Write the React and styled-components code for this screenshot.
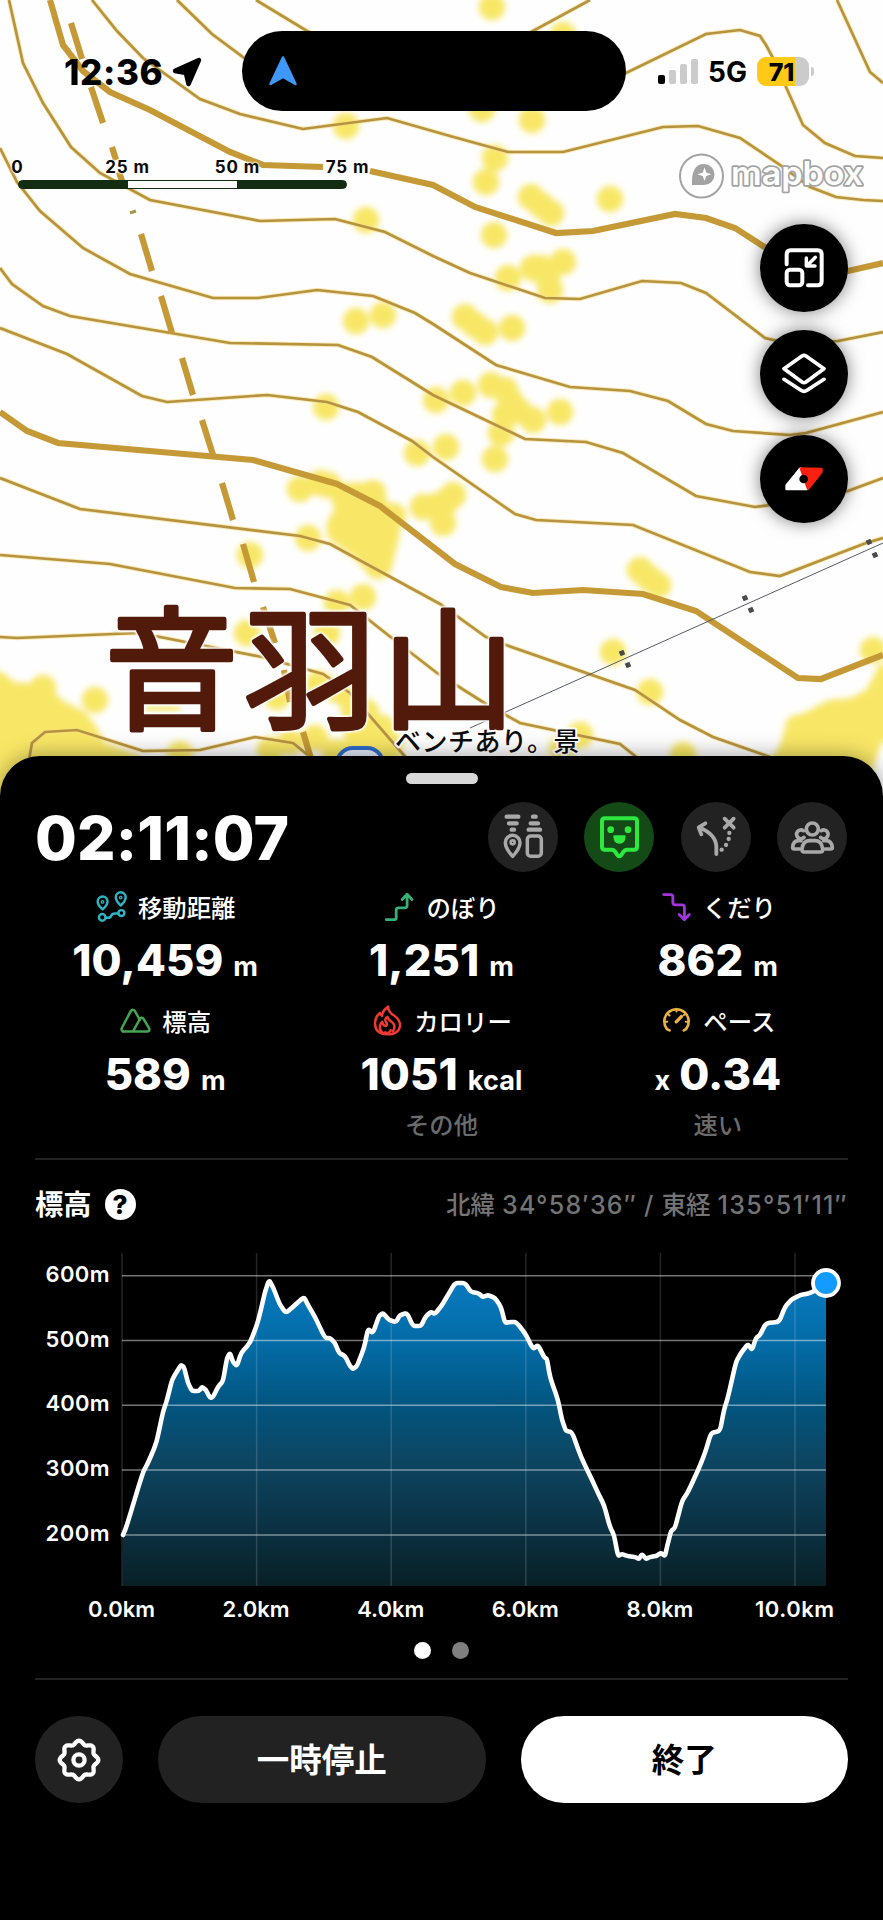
import React from 'react';
import styled, { createGlobalStyle } from 'styled-components';

const GlobalStyle = createGlobalStyle`
  body {
    margin: 0;
    background: #000;
  }
  * {
    box-sizing: border-box;
  }
`;

const FONT = "Inter, 'Noto Sans CJK JP', sans-serif";

/* ---------- layout ---------- */

const Screen = styled.div`
  display: flex;
  flex-direction: column;
  width: 883px;
  height: 1920px;
  overflow: hidden;
  background: #000;
  font-family: ${FONT};
  color: #fff;
`;

const MapArea = styled.div`
  position: relative;
  flex: none;
  height: 756px;
`;

const MapCanvas = styled.svg`
  position: absolute;
  top: 0;
  left: 0;
  background: #fefefe;
`;

const PlaceName = styled.text`
  fill: #521a0b;
  stroke: #521a0b;
  stroke-width: 4.4px;
  stroke-linejoin: round;
  filter: drop-shadow(0 0 1px #fff) drop-shadow(0 0 1px #fff) drop-shadow(0 0 1px #fff);
`;

const StatusBar = styled.div`
  position: relative;
  display: grid;
  grid-template-columns: 242px 384px 1fr;
  align-items: center;
  height: 142px;
  color: #000;
`;

const Clock = styled.div`
  display: flex;
  align-items: center;
  gap: 9px;
  padding: 2px 0 0 64px;
  font-size: 35px;
  font-weight: 800;
  line-height: 40px;
  letter-spacing: 0.6px;
`;

const Island = styled.div`
  display: flex;
  align-items: center;
  height: 80px;
  padding-left: 26px;
  border-radius: 40px;
  background: #000;
`;

const Signals = styled.div`
  display: flex;
  align-items: center;
  padding: 1px 0 0 32px;
  font-size: 28px;
  font-weight: 650;
`;

const SignalBars = styled.div`
  display: flex;
  align-items: flex-end;
  gap: 4px;
  height: 25px;
  margin-right: 10px;
`;

const Bar = styled.span`
  width: 7px;
  height: ${props => props.$h}px;
  border-radius: 2px;
  background: ${props => (props.$on ? '#000' : '#cbcbcb')};
`;

const Battery = styled.div`
  display: flex;
  align-items: center;
  justify-content: center;
  width: 52px;
  height: 29px;
  margin-left: 10px;
  padding-right: 3px;
  border-radius: 9px;
  background: linear-gradient(90deg, #fec917 38px, #cbcbcb 38px);
  font-size: 25px;
  font-weight: 800;
  letter-spacing: -0.3px;
`;

const BatteryTip = styled.span`
  width: 3px;
  height: 9px;
  margin-left: 2px;
  border-radius: 0 4px 4px 0;
  background: #cbcbcb;
`;

const MapTop = styled.div`
  position: relative;
  display: flex;
  justify-content: space-between;
  height: 61px;
  padding: 11px 19px 0 18px;
`;

const Scale = styled.div`
  width: 329px;
`;

const ScaleLabels = styled.div`
  display: flex;
  justify-content: space-between;
  margin: 0 -31px;
  color: #0a0a0a;
  font-size: 17px;
  font-weight: 650;
  line-height: 27px;
  letter-spacing: 0.9px;
  text-shadow: 0 0 2px #fff, 0 0 2px #fff, 0 0 3px #fff;

  span {
    width: 61px;
    padding-top: 1px;
    text-align: center;
    white-space: nowrap;
  }
`;

const ScaleBar = styled.div`
  display: grid;
  grid-template-columns: repeat(3, 1fr);
  height: 9px;
  margin-top: -1px;
  border: 1px solid #132d12;
  border-radius: 5px;
  overflow: hidden;
  background: #132d12;

  i:nth-child(2) {
    background: #fafafa;
  }
`;

const LogoBox = styled.div`
  margin-top: -2px;
`;

const MapButtons = styled.div`
  position: relative;
  display: flex;
  flex-direction: column;
  align-items: flex-end;
  gap: 17.500px;
  padding: 21px 35px 0 0;
`;

const RoundButton = styled.button`
  display: flex;
  align-items: center;
  justify-content: center;
  width: 88px;
  height: 88px;
  padding: 0;
  border: 0;
  border-radius: 50%;
  background: #000;
  box-shadow: 0 0 17px rgba(0, 0, 0, 0.5);
`;

const Sheet = styled.div`
  position: relative;
  display: flex;
  flex-direction: column;
  flex: 1;
  padding-top: 17px;
  border-radius: 40px 40px 0 0;
  background: #000;
  box-shadow: 0 0 22px rgba(0, 0, 0, 0.38);
`;

const Handle = styled.div`
  align-self: center;
  width: 72px;
  height: 11px;
  border-radius: 6px;
  background: #d8d8d8;
`;

const SheetHeader = styled.div`
  display: flex;
  align-items: center;
  justify-content: space-between;
  height: 70px;
  margin: 18px 36px 18px 35px;
`;

const Timer = styled.div`
  padding-top: 1px;
  font-size: 60.5px;
  font-weight: 800;
  line-height: 70px;
  letter-spacing: 0.2px;
`;

const Actions = styled.div`
  display: flex;
  gap: 26.5px;
`;

const Action = styled.button`
  width: 70px;
  height: 70px;
  padding: 0;
  border: 0;
  border-radius: 50%;
  background: ${props => (props.$active ? '#134a16' : '#222')};
  color: ${props => (props.$active ? '#2fe83f' : '#a9a9a9')};

  svg {
    display: block;
  }
`;

const Stats = styled.div`
  display: grid;
  grid-template-columns: repeat(3, 1fr);
  row-gap: 14px;
  height: 268px;
  margin: 0 27px;
  align-content: start;
`;

const StatBox = styled.div`
  display: flex;
  flex-direction: column;
  align-items: center;
`;

const StatLabel = styled.div`
  display: flex;
  align-items: center;
  gap: 10px;
  height: 36px;
  padding-bottom: 4px;
  font-size: 24.4px;
  font-weight: 500;
`;

const StatValue = styled.div`
  height: 60px;
  margin-top: 4px;
  font-size: 43.5px;
  font-weight: 800;
  line-height: 60px;
  letter-spacing: 0.1px;

  small {
    font-size: 27px;
    font-weight: 750;
  }
  small:first-child {
    margin-right: 9px;
  }
  small:last-child {
    margin-left: 10px;
  }
`;

const StatNote = styled.div`
  height: 36px;
  margin-top: 3px;
  color: #6b6b6b;
  font-size: 24.3px;
  font-weight: 500;
  line-height: 36px;
`;

const Divider = styled.div`
  flex: none;
  height: 2px;
  margin: 0 35px;
  background: #222;
`;

const ChartHeader = styled.div`
  display: flex;
  align-items: center;
  height: 40px;
  margin: 24px 35px 16px 35px;
`;

const ChartTitle = styled.div`
  padding-bottom: 3px;
  font-size: 28.3px;
  font-weight: 700;
`;

const Help = styled.span`
  display: flex;
  align-items: center;
  justify-content: center;
  width: 31px;
  height: 31px;
  margin-left: 13px;
  border-radius: 50%;
  background: #fff;
  color: #000;
  font-size: 26px;
  font-weight: 800;
`;

const Coords = styled.div`
  margin-left: auto;
  padding-bottom: 2px;
  color: #747474;
  font-size: 25px;
  font-weight: 500;
  letter-spacing: 1.3px;
  word-spacing: -1px;
  white-space: nowrap;

  span {
    font-size: 24.5px;
    letter-spacing: 0;
  }
`;

const ChartSvg = styled.svg`
  display: block;
  flex: none;
  font-family: ${FONT};
`;

const Pager = styled.div`
  display: flex;
  justify-content: center;
  gap: 21px;
  margin: 17px 0 19px;
`;

const Dot = styled.span`
  width: 17px;
  height: 17px;
  border-radius: 50%;
  background: ${props => (props.$on ? '#fff' : '#808080')};
`;

const Footer = styled.div`
  display: grid;
  grid-template-columns: 88px 1fr 1fr;
  gap: 35px;
  height: 87px;
  margin: 36px 35px 0;
`;

const FooterButton = styled.button`
  display: flex;
  align-items: center;
  justify-content: center;
  padding: 0;
  border: 0;
  border-radius: 44px;
  background: ${props => (props.$light ? '#fff' : '#222')};
  color: ${props => (props.$light ? '#000' : '#fff')};
  font-family: ${FONT};
  font-size: 32.5px;
  font-weight: 700;

  span {
    padding-bottom: 5px;
  }
`;

/* ---------- map data ---------- */

const CONTOURS = [
  '9,0 23,63 43,103 71,147 100,173 150,200 260,221 335,219 385,232 433,256 470,273 545,298 580,299 642,281 681,283 706,293 765,338 790,344 838,341 883,332',
  '92,0 117,31 143,58 200,99 240,114 303,129 387,118 450,136 508,152 563,152 663,127 698,126 740,138 783,167 810,187 836,197 863,200 883,201',
  '177,0 212,34 247,60 300,90',
  '600,85 626,73 706,34 740,30 760,36 766,45 773,58 786,87 803,125 825,143 855,156 883,158',
  '256,0 307,31 340,45',
  '520,38 533,31 590,0',
  '837,0 870,72 883,83',
  '0,148 17,182 40,211 83,248 130,274 213,298 258,298 317,290 373,296 415,313 433,324 496,365 570,387 630,391 668,401 706,424 733,431 790,435 806,433 883,412',
  '0,268 12,284 43,306 70,316 230,343 338,345 372,357 433,395 525,439 586,442 623,453 696,496 755,507 770,505 848,491 883,478',
  '0,328 67,354 142,396 167,402 267,395 327,402 358,412 412,441 433,457 515,514 536,520 633,525 750,572 780,576 866,543 883,538',
  '0,478 80,509 300,536 330,544 440,604 486,637 506,645 635,690 680,720 713,737 770,757',
  '0,555 110,564 235,588 290,589 350,605 388,635 437,673 486,704 520,723 620,744 640,760',
  '0,637 17,638 137,633 155,636 262,657 323,674 350,693 408,760',
  '29,760 32,743 45,732 77,730 143,751 200,750 255,737 293,743 309,756',
];

const BOLD_CONTOURS = [
  '50,0 63,45 83,71 110,92 150,110 230,152 263,165 323,167',
  '370,171 433,185 475,207 556,233 593,231 675,214 706,218 735,228 763,246 790,262 820,274 848,271 883,263',
  '0,412 27,431 58,443 253,460 337,484 380,506 433,547 455,564 501,587 533,593 583,590 643,594 696,611 798,678 821,679 883,655',
];

const DASHES =
  'M71 23L82 59M91 87L103 123M112 147L116 160M119 172L122 181M141 234L152 271M161 296L172 333M182 358L193 395M202 420L213 455M222 483L233 520M243 544L254 582M263 607L275 643M284 670L290 702M303 732L312 762';

const BLOBS = [
  [346, 126], [366, 220], [356, 321], [383, 315], [492, 7], [563, 35], [482, 109], [532, 120],
  [495, 158], [486, 182], [531, 197], [541, 205], [551, 213], [610, 199], [494, 235], [533, 268],
  [563, 262], [508, 278], [550, 290], [547, 276], [465, 317], [475, 325], [485, 332], [512, 328],
  [491, 385], [463, 393], [436, 400], [511, 402], [505, 415], [533, 420], [560, 412], [501, 433],
  [495, 459], [446, 447], [417, 453], [453, 495], [446, 502], [423, 507], [443, 523], [326, 407],
  [300, 489], [328, 485], [373, 493], [345, 500], [377, 510], [393, 516], [347, 515], [362, 523],
  [340, 531], [308, 538], [360, 540], [385, 535], [372, 552], [378, 566], [363, 597], [337, 603],
  [250, 555], [247, 633], [327, 633], [277, 697], [318, 684], [350, 697], [366, 712], [382, 728],
  [390, 745], [640, 570], [649, 578], [658, 585], [613, 652], [650, 692], [580, 735], [562, 748],
  [683, 755], [873, 650], [43, 688], [95, 700], [180, 754], [270, 750], [290, 742], [315, 738],
  [335, 752], [320, 483], [435, 506], [505, 390], [519, 411], [541, 268], [798, 728], [355, 725],
];

const TOWERS = [[622, 653], [628, 665], [745, 598], [751, 610], [869, 542], [875, 555]];

function MapBackground() {
  return (
    <MapCanvas width="883" height="820" viewBox="0 0 883 820">
      <defs>
        <filter id="soft" x="-10%" y="-10%" width="120%" height="120%">
          <feGaussianBlur stdDeviation="3.4" />
        </filter>
      </defs>
      <g fill="#f8e766" filter="url(#soft)">
        {BLOBS.map(([x, y], i) => (
          <circle key={i} cx={x} cy={y} r="13.2" />
        ))}
        <path d="M318 476L345 483L373 482L386 500L402 512L399 538L390 574L372 578L352 556L330 540L326 524L336 506Z" />
        <path d="M318 672L348 684L372 706L396 740L402 770H330L345 735L340 705L314 694Z" />
        <path d="M-10 668Q5 672 14 682L45 684L62 700L85 712L96 726L104 742L140 756V830H-10Z" />
        <path d="M768 765L780 745L788 718L806 712L828 700L850 698L866 690L880 664H900V740L882 742L872 770V830H760Z" />
        <rect x="144" y="705" width="36" height="6" />
      </g>
      <g fill="none" stroke="#f7dc8a" strokeWidth="4.6" opacity="0.6">
        {CONTOURS.map(points => (
          <polyline key={points} points={points} />
        ))}
      </g>
      <g fill="none" stroke="#b6933f" strokeWidth="2.7">
        {CONTOURS.map(points => (
          <polyline key={points} points={points} />
        ))}
      </g>
      <g fill="none" stroke="#c59a36" strokeWidth="6.200">
        {BOLD_CONTOURS.map(points => (
          <polyline key={points} points={points} />
        ))}
        <path d={DASHES} />
      </g>
      <path d="M130 213L136 211" stroke="#a9944e" strokeWidth="3" />
      <path d="M470 728L883 543" stroke="#565a62" strokeWidth="1" />
      {TOWERS.map(([x, y]) => (
        <rect
          key={x}
          x={x - 2.5}
          y={y - 2.5}
          width="5"
          height="5"
          fill="#4a4a4a"
          transform={`rotate(-24 ${x} ${y})`}
        />
      ))}
      <rect x="337" y="748" width="46" height="40" rx="16" fill="#e4ecf8" stroke="#2e6bc8" strokeWidth="4" />
      <g fontFamily="'Noto Sans CJK JP', sans-serif">
        <PlaceName x="105" y="719" fontSize="133" fontWeight="400" letterSpacing="5.500">
          音羽山
        </PlaceName>
        <text x="395" y="751" fontSize="26" fontWeight="500" letterSpacing="0.500" fill="#0c0c0c" stroke="#fff" strokeWidth="4" paintOrder="stroke" strokeLinejoin="round">
          ベンチあり。景
        </text>
      </g>
    </MapCanvas>
  );
}

function MapboxLogo() {
  return (
    <svg width="186" height="50" viewBox="678 152 186 50">
      <circle cx="701.500" cy="177" r="21.500" fill="#fff" fillOpacity="0.7" stroke="#a3a3a3" strokeWidth="2" />
      <path d="M692 186Q691 165 704 165A10.5 10.5 0 0 1 704 186Z" fill="#a3a3a3" />
      <path d="M704.500 168.500L706.300 173.500L711.500 175.200L706.300 177L704.500 182L702.700 177L697.500 175.200L702.700 173.500Z" fill="#fff" />
      <text
        x="731"
        y="186"
        fontFamily="Inter, sans-serif"
        fontSize="33"
        fontWeight="600"
        textLength="132"
        lengthAdjust="spacingAndGlyphs"
        fill="#fff"
        stroke="#a3a3a3"
        strokeWidth="3.500"
        strokeLinejoin="round"
        paintOrder="stroke">
        mapbox
      </text>
    </svg>
  );
}

/* ---------- icons ---------- */

const CollapseIcon = () => (
  <svg width="44" height="44" viewBox="1047 737 132 132" fill="none" stroke="#fff" strokeWidth="12" strokeLinecap="round" strokeLinejoin="round">
    <path d="M1061 792V762Q1061 750 1073 750H1154Q1166 750 1166 762V843Q1166 855 1154 855H1125" />
    <rect x="1061" y="808" width="47" height="47" rx="10" />
    <path d="M1147 771L1122 796M1120 773V797H1146" strokeWidth="10.500" />
  </svg>
);

const LayersIcon = () => (
  <svg width="44" height="44" viewBox="1047 1056 132 132" fill="none" stroke="#fff" strokeWidth="11" strokeLinecap="round" strokeLinejoin="round">
    <path d="M1107 1068Q1113 1064 1119 1068L1173 1106L1119 1146Q1113 1150 1107 1146L1053 1106Z" />
    <path d="M1053 1138L1104 1171Q1113 1177 1122 1171L1173 1138" />
  </svg>
);

const CompassIcon = () => (
  <svg width="44" height="44" viewBox="1047 261 132 132" strokeWidth="8" strokeLinejoin="round">
    <path d="M1102 296L1061 346V357H1122Z" fill="#fff" stroke="#fff" />
    <path d="M1104 296L1165 297V306L1125 356Z" fill="#fb200f" stroke="#fb200f" />
    <circle cx="1112" cy="327" r="13" fill="#000" />
  </svg>
);

const LocationArrow = () => (
  <svg width="30" height="30" viewBox="0 0 29 29">
    <path d="M26 3L16 26L13.500 15.500L3 13.500Z" fill="#000" stroke="#000" strokeWidth="4.500" strokeLinejoin="round" />
  </svg>
);

const IslandArrow = () => (
  <svg width="30" height="32" viewBox="0 0 30 32">
    <path d="M15 2.500L27.500 29L15 22L2.500 29Z" fill="#3f98f7" stroke="#3f98f7" strokeWidth="2.500" strokeLinejoin="round" />
  </svg>
);

const strokeProps = {
  width: 70,
  height: 70,
  fill: 'none',
  stroke: 'currentColor',
  strokeLinecap: 'round',
  strokeLinejoin: 'round',
};

const SwitchIcon = () => (
  <svg {...strokeProps} viewBox="53 37 210 210" strokeWidth="10.500">
    <path d="M109 81H144M116 101H139M124 120H131M188 81H196M181 101H203M175 120H209" strokeWidth="13" />
    <path d="M127 200Q105 176 105 159A22 22 0 0 1 149 159Q149 176 127 200Z" />
    <circle cx="127" cy="158" r="6" strokeWidth="8" />
    <rect x="171" y="139" width="42" height="61" rx="10" />
  </svg>
);

const FaceIcon = () => (
  <svg {...strokeProps} viewBox="343 37 210 210" strokeWidth="12">
    <path d="M406 86H493Q502 86 502 95V171Q502 180 493 180H473Q465 180 461 187L454 197Q449 202 444 197L437 187Q433 180 425 180H406Q397 180 397 171V95Q397 86 406 86Z" />
    <circle cx="423" cy="120" r="10" fill="currentColor" stroke="none" />
    <circle cx="475" cy="120" r="10" fill="currentColor" stroke="none" />
    <path d="M434 140H465Q464 159 449.500 159T434 140Z" fill="currentColor" strokeWidth="6" />
  </svg>
);

const RouteForkIcon = () => (
  <svg {...strokeProps} viewBox="633 37 210 210" strokeWidth="11.500">
    <path d="M739 193V170Q737 133 689 114M706 101L686 113L694 134" />
    <path d="M764 87L791 114M791 87L764 114" />
    <g fill="currentColor" stroke="none">
      <circle cx="755" cy="180" r="6.500" />
      <circle cx="768" cy="166" r="6.500" />
      <circle cx="776" cy="148" r="6.500" />
      <circle cx="778" cy="130" r="6.500" />
    </g>
  </svg>
);

const PeopleIcon = () => (
  <svg {...strokeProps} viewBox="922 37 210 210" strokeWidth="11">
    <circle cx="1028" cy="118" r="18" />
    <path d="M1004 187Q996 187 997 178Q1000 154 1018 153H1038Q1056 154 1059 178Q1060 187 1052 187Z" />
    <path d="M1003 143A13 13 0 1 1 1001 123M1053 143A13 13 0 1 0 1055 123" />
    <path d="M994 153H985Q970 155 969 173Q969 178 974 178H990M1062 153H1071Q1086 155 1088 173Q1088 178 1083 178H1066" />
  </svg>
);

const SmallIcon = ({ box, color, width = 8.500, children }) => (
  <svg width="33" height="33" viewBox={box} fill="none" stroke={color} strokeWidth={width} strokeLinecap="round" strokeLinejoin="round">
    {children}
  </svg>
);

const DistanceIcon = () => (
  <SmallIcon box="285 450 100 100" color="#2fb4c4" width={7.5}>
    <path d="M308 509Q293 495 293 485A15 15 0 0 1 323 485Q323 495 308 509Z" />
    <path d="M363 497Q348 483 348 472A15 15 0 0 1 378 472Q378 483 363 497Z" />
    <circle cx="308" cy="486" r="2" />
    <circle cx="363" cy="473" r="2" />
    <circle cx="307" cy="533" r="10" />
    <circle cx="365" cy="520" r="9" />
    <path d="M318 534H326Q332 534 334 528Q337 521 344 521H355" />
  </SmallIcon>
);

const AscentIcon = () => (
  <SmallIcon box="1151 450 100 100" color="#36b176">
    <path d="M1161 540H1184Q1191 540 1191 533V511Q1191 504 1198 504H1217Q1224 504 1224 497V464M1209 479L1224 463L1239 479" />
  </SmallIcon>
);

const DescentIcon = () => (
  <SmallIcon box="681 450 100 100" color="#a136dc">
    <path d="M692 464H713Q720 464 720 471V488Q720 495 727 495H748Q755 495 755 502V539M739 524L755 540L770 524" />
  </SmallIcon>
);

const MountainIcon = () => (
  <SmallIcon box="358 794 100 100" color="#46a552" width={7.5}>
    <path d="M370 877Q363 874 367 866L394 815Q400 808 406 815L421 842" />
    <path d="M370 877H446Q453 874 449 867L432 838Q427 833 422 838L401 876" />
  </SmallIcon>
);

const FlameIcon = () => (
  <SmallIcon box="1116 794 100 100" color="#ee3a33" width={7.5}>
    <path d="M1168 802Q1168 818 1186 829Q1205 843 1204 860Q1201 885 1166 886Q1129 885 1128 853Q1128 833 1143 821Q1144 828 1149 830Q1152 812 1168 802Z" />
    <path d="M1154 884Q1139 873 1144 857Q1147 850 1150 848Q1152 860 1161 861Q1168 858 1161 848Q1156 838 1166 833Q1168 843 1180 849Q1193 860 1182 877" />
    <path d="M1159 880Q1169 886 1176 873" />
  </SmallIcon>
);

const PaceIcon = () => (
  <SmallIcon box="682 792 100 100" color="#eab240" width={8}>
    <path d="M711 872L703 868A37 37 0 1 1 761 868L754 872" />
    <path d="M732 806V815M704 821L711 827M760 821L754 826M697 846H704M760 846H767" strokeWidth="6" />
    <path d="M731 846L747 830" strokeWidth="10" />
  </SmallIcon>
);

// wavy outline with eight lobes
const gearPath = (() => {
  const points = [];
  for (let i = 0; i < 160; i++) {
    const a = (i / 160) * Math.PI * 2;
    const r = 17.6 + 1.7 * Math.cos(8 * a);
    points.push(`${(24 + r * Math.sin(a)).toFixed(2)} ${(24 - r * Math.cos(a)).toFixed(2)}`);
  }
  return `M${points.join('L')}Z`;
})();

const GearIcon = () => (
  <svg width="48" height="48" viewBox="0 0 48 48" fill="none" stroke="#fff" strokeWidth="4.300" strokeLinejoin="round">
    <path d={gearPath} />
    <circle cx="24" cy="24" r="5.600" />
  </svg>
);

/* ---------- stats ---------- */

const stats = [
  { label: '移動距離', Icon: DistanceIcon, value: '10,459', unit: 'm' },
  { label: 'のぼり', Icon: AscentIcon, value: '1,251', unit: 'm' },
  { label: 'くだり', Icon: DescentIcon, value: '862', unit: 'm' },
  { label: '標高', Icon: MountainIcon, value: '589', unit: 'm' },
  { label: 'カロリー', Icon: FlameIcon, value: '1051', unit: 'kcal', note: 'その他' },
  { label: 'ペース', Icon: PaceIcon, value: '0.34', prefix: 'x', note: '速い' },
];

function Stat({ label, Icon, value, unit, prefix, note }) {
  return (
    <StatBox>
      <StatLabel>
        <Icon />
        <span>{label}</span>
      </StatLabel>
      <StatValue>
        {prefix ? <small>{prefix}</small> : null}
        <span>{value}</span>
        {unit ? <small>{unit}</small> : null}
      </StatValue>
      {note ? <StatNote>{note}</StatNote> : null}
    </StatBox>
  );
}

/* ---------- elevation chart ---------- */

const PROFILE =
  '123,1535 126,1528 143,1472 147,1465 154,1449 157,1440 163,1412 167,1400 172,1380 176,1373 181,1365 184,1367 188,1383 192,1391 199,1391 202,1387 206,1390 210,1398 213,1397 218,1387 223,1381 227,1358 230,1353 233,1362 237,1366 241,1353 250,1343 258,1322 265,1292 269,1280 273,1287 280,1305 286,1313 295,1305 304,1297 308,1305 315,1317 325,1338 330,1338 335,1343 339,1353 345,1356 350,1366 353,1369 357,1366 364,1348 368,1329 373,1333 379,1316 383,1313 389,1320 396,1322 400,1315 407,1313 413,1326 421,1326 426,1316 431,1312 435,1314 442,1305 448,1295 455,1283 465,1283 471,1292 478,1293 483,1297 488,1295 495,1298 501,1307 505,1323 510,1322 516,1322 525,1333 533,1349 538,1345 544,1357 547,1359 550,1377 558,1400 562,1420 566,1431 572,1432 581,1457 593,1482 598,1493 604,1505 610,1527 614,1535 618,1556 622,1554 627,1556 635,1557 639,1559 642,1554 646,1559 650,1557 656,1556 661,1553 665,1556 667,1547 671,1531 675,1528 682,1501 688,1492 699,1468 705,1453 711,1433 720,1431 724,1410 728,1397 736,1362 741,1353 748,1344 752,1350 756,1338 760,1335 766,1323 779,1322 785,1307 791,1300 800,1295 806,1294 813,1292 826,1283';

// cuts every corner with a short curve
const smoothLine = (() => {
  const pts = PROFILE.split(' ').map(p => p.split(',').map(Number));
  let d = `M${pts[0]}`;
  for (let i = 1; i < pts.length - 1; i++) {
    const [x, y] = pts[i];
    const [nx, ny] = pts[i + 1];
    const [px, py] = pts[i - 1];
    d += `L${x - (x - px) * 0.28} ${y - (y - py) * 0.28}Q${x} ${y} ${x + (nx - x) * 0.28} ${y + (ny - y) * 0.28}`;
  }
  return `${d}L${pts[pts.length - 1]}`;
})();

const elevations = [600, 500, 400, 300, 200];
const distances = [0, 2, 4, 6, 8, 10];

function ElevationChart() {
  return (
    <ChartSvg width="883" height="385" viewBox="0 1240 883 385">
      <defs>
        <linearGradient id="fill" gradientUnits="userSpaceOnUse" x1="0" y1="1280" x2="0" y2="1586">
          <stop offset="0" stopColor="#087abf" />
          <stop offset="0.22" stopColor="#036aa4" />
          <stop offset="0.42" stopColor="#02547d" />
          <stop offset="0.58" stopColor="#0d4663" />
          <stop offset="0.8" stopColor="#0b3244" />
          <stop offset="1" stopColor="#082026" />
        </linearGradient>
      </defs>
      <path d={`${smoothLine}V1586H122.500Z`} fill="url(#fill)" />
      {elevations.map((m, i) => (
        <g key={m}>
          <path d={`M122 ${1275.7 + i * 64.8}H826`} stroke="#fff" strokeOpacity="0.46" strokeWidth="1.500" />
          <text x="109.500" y={1281.7 + i * 64.8} fill="#fff" fontSize="22" fontWeight="570" textAnchor="end" textLength="64">
            {m}m
          </text>
        </g>
      ))}
      {distances.map((km, i) => (
        <g key={km}>
          <path d={`M${122 + i * 134.6} 1253V1586`} stroke="#fff" strokeOpacity="0.15" strokeWidth="1.500" />
          <text
            x={121.5 + i * 134.6}
            y="1617"
            fill="#fff"
            fontSize="22"
            fontWeight="570"
            textAnchor="middle"
            textLength={km === 10 ? 79 : 67}>
            {km}.0km
          </text>
        </g>
      ))}
      <path d={smoothLine} fill="none" stroke="#fff" strokeWidth="4.600" strokeLinecap="round" strokeLinejoin="round" />
      <circle cx="826" cy="1283" r="13" fill="#139bff" stroke="#fff" strokeWidth="3.800" />
    </ChartSvg>
  );
}

export default function App() {
  return (
    <Screen>
      <GlobalStyle />
      <MapArea>
        <MapBackground />
        <StatusBar>
          <Clock>
            12:36
            <LocationArrow />
          </Clock>
          <Island>
            <IslandArrow />
          </Island>
          <Signals>
            <SignalBars>
              <Bar $h={9} $on />
              <Bar $h={14} />
              <Bar $h={20} />
              <Bar $h={25} />
            </SignalBars>
            5G
            <Battery>71</Battery>
            <BatteryTip />
          </Signals>
        </StatusBar>
        <MapTop>
          <Scale>
            <ScaleLabels>
              <span>0</span>
              <span>25 m</span>
              <span>50 m</span>
              <span>75 m</span>
            </ScaleLabels>
            <ScaleBar>
              <i />
              <i />
              <i />
            </ScaleBar>
          </Scale>
          <LogoBox>
            <MapboxLogo />
          </LogoBox>
        </MapTop>
        <MapButtons>
          <RoundButton>
            <CollapseIcon />
          </RoundButton>
          <RoundButton>
            <LayersIcon />
          </RoundButton>
          <RoundButton>
            <CompassIcon />
          </RoundButton>
        </MapButtons>
      </MapArea>
      <Sheet>
        <Handle />
        <SheetHeader>
          <Timer>02:11:07</Timer>
          <Actions>
            <Action>
              <SwitchIcon />
            </Action>
            <Action $active>
              <FaceIcon />
            </Action>
            <Action>
              <RouteForkIcon />
            </Action>
            <Action>
              <PeopleIcon />
            </Action>
          </Actions>
        </SheetHeader>
        <Stats>
          {stats.map(stat => (
            <Stat key={stat.label} {...stat} />
          ))}
        </Stats>
        <Divider />
        <ChartHeader>
          <ChartTitle>標高</ChartTitle>
          <Help>?</Help>
          <Coords>
            <span>北緯</span> 34°58′36″ / <span>東経</span> 135°51′11″
          </Coords>
        </ChartHeader>
        <ElevationChart />
        <Pager>
          <Dot $on />
          <Dot />
        </Pager>
        <Divider />
        <Footer>
          <FooterButton>
            <GearIcon />
          </FooterButton>
          <FooterButton>
            <span>一時停止</span>
          </FooterButton>
          <FooterButton $light>
            <span>終了</span>
          </FooterButton>
        </Footer>
      </Sheet>
    </Screen>
  );
}
